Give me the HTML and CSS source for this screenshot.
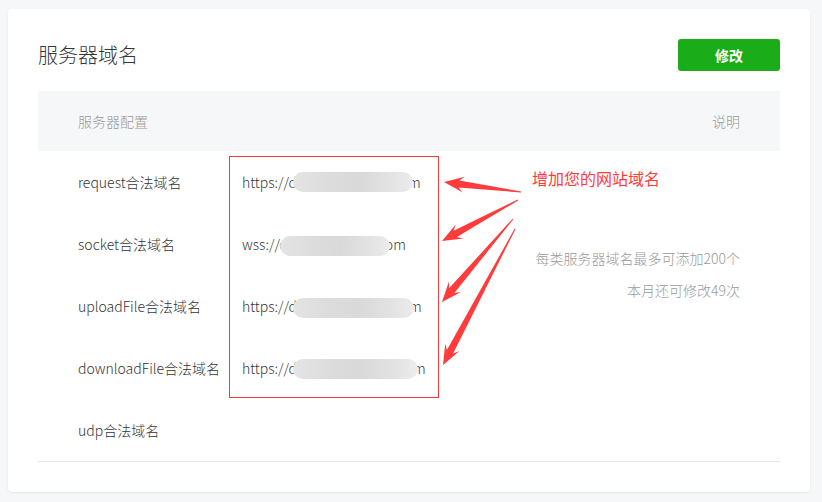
FILE: index.html
```html
<!DOCTYPE html>
<html lang="zh-CN">
<head>
<meta charset="utf-8">
<title>服务器域名</title>
<link rel="stylesheet" href="styles.css">
</head>
<body>
<div class="card">
  <div class="title-row">
    <h2 class="title">服务器域名</h2>
    <button class="btn-primary">修改</button>
  </div>
  <div class="table-head">
    <span>服务器配置</span>
    <span>说明</span>
  </div>
  <div class="table-body">
    <div class="label r1">request合法域名</div>
    <div class="value r1">https://d<span class="blob b1"></span>m</div>
    <div class="label r2">socket合法域名</div>
    <div class="value r2">wss://d<span class="blob b2"></span>om</div>
    <div class="label r3">uploadFile合法域名</div>
    <div class="value r3">https://d<span class="blob b3"></span>m</div>
    <div class="label r4">downloadFile合法域名</div>
    <div class="value r4">https://d<span class="blob b4"></span>m</div>
    <div class="label r5">udp合法域名</div>
    <div class="value r5"></div>
    <div class="desc">
      <p>每类服务器域名最多可添加200个</p>
      <p>本月还可修改49次</p>
    </div>
  </div>
</div>

<div class="mark-box"></div>
<div class="mark-text">增加您的网站域名</div>
<svg class="arrows" width="822" height="502" viewBox="0 0 822 502">
  <polygon points="521.06,191.5 459.33,180.46 464.86,176.65 444,182 462.80,192.51 458.43,187.40 520.94,192.5"/>
  <polygon points="517.76,199.56 453.54,230.80 455.80,224.46 442,241 463.40,238.54 456.86,236.96 518.24,200.44"/>
  <polygon points="512.62,218.67 449.09,288.32 448.92,281.60 442,302 461.08,292.00 454.41,292.88 513.38,219.33"/>
  <polygon points="514.56,228.77 446.93,350.10 445.29,343.58 443,365 459.43,351.06 453.11,353.38 515.44,229.23"/>
</svg>
</body>
</html>
```

FILE: styles.css
```css
html, body {
  margin: 0;
  padding: 0;
}
body {
  background: #f6f7f9;
  font-family: "Noto Sans CJK SC", "Microsoft YaHei", sans-serif;
  font-weight: 300;
  color: #353535;
  font-size: 14px;
  padding: 9px 12px 0 8px;
  width: 822px;
  height: 502px;
  box-sizing: border-box;
  overflow: hidden;
}
.card {
  background: #fff;
  border-radius: 4px;
  box-shadow: 0 1px 2px rgba(0,0,0,0.08);
  padding: 30px 30px 30px;
}
.title-row {
  display: flex;
  justify-content: space-between;
  align-items: center;
  height: 32px;
}
.title {
  margin: 0;
  font-size: 20px;
  font-weight: 300;
  color: #353535;
  line-height: 32px;
}
.btn-primary {
  width: 102px;
  height: 32px;
  border: 0;
  border-radius: 3px;
  background: #1aad19;
  color: #fff;
  font-family: inherit;
  font-size: 14px;
  font-weight: bold;
  padding: 0;
}
.table-head {
  margin-top: 20px;
  height: 60px;
  background: #f6f7f9;
  display: flex;
  justify-content: space-between;
  align-items: center;
  padding: 0 40px;
  color: #9a9a9a;
}
.table-body {
  display: grid;
  grid-template-columns: 204px 200px 1fr;
  grid-template-rows: repeat(5, 62px);
  border-bottom: 1px solid #e7e7eb;
}
.label {
  grid-column: 1;
  padding-left: 40px;
  display: flex;
  align-items: center;
}
.value {
  grid-column: 2;
  display: flex;
  align-items: center;
  white-space: nowrap;
}
.r1 { grid-row: 1; }
.r2 { grid-row: 2; }
.r3 { grid-row: 3; }
.r4 { grid-row: 4; }
.r5 { grid-row: 5; }
.blob {
  display: inline-block;
  position: relative;
  z-index: 1;
  height: 20px;
  border-radius: 10px;
  background: linear-gradient(90deg, #e4e4e4 0%, #dcdcdc 30%, #d9d9d9 55%, #e2e2e2 80%, #ececec 100%);
  margin-left: -4px;
  margin-right: -5px;
}
.b1 { width: 120px; }
.b2 { width: 110px; margin-left: -8px; margin-top: 3px; }
.b3 { width: 121px; margin-top: 4px; }
.b4 { width: 125px; margin-top: 2px; }
.desc {
  grid-column: 3;
  grid-row: 1 / span 4;
  align-self: center;
  text-align: right;
  padding-right: 40px;
  color: #9a9a9a;
  font-size: 14px;
  margin-top: -2px;
}
.desc p {
  margin: 0;
  line-height: 32px;
}
.mark-box {
  position: absolute;
  left: 229px;
  top: 156px;
  width: 208px;
  height: 240px;
  border: 1px solid #f03c3c;
}
.mark-text {
  position: absolute;
  left: 532px;
  top: 166px;
  font-size: 16px;
  font-weight: 400;
  line-height: 24px;
  color: #ff3b3b;
}
.arrows {
  position: absolute;
  left: 0;
  top: 0;
  pointer-events: none;
}
.arrows polygon {
  fill: #ff3b3b;
}
```
